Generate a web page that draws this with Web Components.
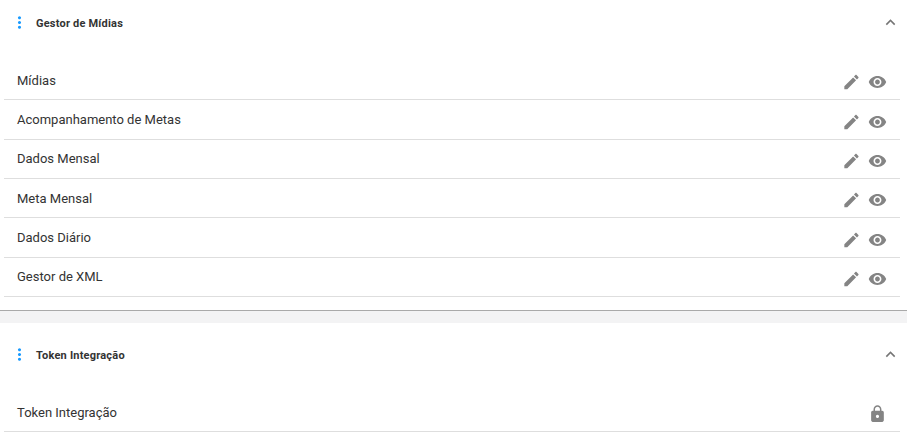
<!DOCTYPE html>
<html lang="pt-BR">
<head>
<meta charset="utf-8">
<title>Permissões</title>
<style>
    body {
        height: 442px;
        margin: 0;
        background: #f3f3f4;
        font-family: Roboto, 'Liberation Sans', sans-serif;
        color: #333333;
        overflow: hidden;
    }

    .permissions {
        display: flex;
        flex-direction: column;
        gap: 12px;
        height: 442px;
    }

    permission-panel:last-child {
        --panel-top: 9px;
        flex: 1;
        border-bottom: none;
    }
</style>
</head>
<body>
<div class="permissions">
    <permission-panel heading="Gestor de Mídias">
        <permission-row icons="edit view">Mídias</permission-row>
        <permission-row icons="edit view">Acompanhamento de Metas</permission-row>
        <permission-row icons="edit view">Dados Mensal</permission-row>
        <permission-row icons="edit view">Meta Mensal</permission-row>
        <permission-row icons="edit view">Dados Diário</permission-row>
        <permission-row icons="edit view">Gestor de XML</permission-row>
    </permission-panel>
    <permission-panel heading="Token Integração">
        <permission-row icons="lock">Token Integração</permission-row>
    </permission-panel>
</div>

<script>
const ICONS = {
    more: 'M12 8c1.1 0 2-.9 2-2s-.9-2-2-2-2 .9-2 2 .9 2 2 2zm0 2c-1.1 0-2 .9-2 2s.9 2 2 2 2-.9 2-2-.9-2-2-2zm0 6c-1.1 0-2 .9-2 2s.9 2 2 2 2-.9 2-2-.9-2-2-2z',
    less: 'M12 8l-6 6 1.41 1.41L12 10.83l4.59 4.58L18 14z',
    edit: 'M3 17.25V21h3.75L17.81 9.94l-3.75-3.75L3 17.25zM20.71 7.04c.39-.39.39-1.02 0-1.41l-2.34-2.34c-.39-.39-1.02-.39-1.41 0l-1.83 1.83 3.75 3.75 1.83-1.83z',
    view: 'M12 4.5C7 4.5 2.73 7.61 1 12c1.73 4.39 6 7.5 11 7.5s9.27-3.11 11-7.5c-1.73-4.39-6-7.5-11-7.5zM12 17c-2.76 0-5-2.24-5-5s2.24-5 5-5 5 2.24 5 5-2.24 5-5 5zm0-8c-1.66 0-3 1.34-3 3s1.34 3 3 3 3-1.34 3-3-1.34-3-3-3z',
    lock: 'M18 8h-1V6c0-2.76-2.24-5-5-5S7 3.24 7 6v2H6c-1.1 0-2 .9-2 2v10c0 1.1.9 2 2 2h12c1.1 0 2-.9 2-2V10c0-1.1-.9-2-2-2zm-6 9c-1.1 0-2-.9-2-2s.9-2 2-2 2 .9 2 2-.9 2-2 2zm3.1-9H8.9V6c0-1.71 1.39-3.1 3.1-3.1 1.71 0 3.1 1.39 3.1 3.1v2z'
};

class PanelIcon extends HTMLElement {
    constructor() {
        super();
        this.attachShadow({ mode: 'open' });
    }

    connectedCallback() {
        const box = this.getAttribute('box') || '0 0 24 24';

        this.shadowRoot.innerHTML = `
            <style>
                :host {
                    display: block;
                    width: var(--icon-size, 20px);
                    height: var(--icon-size, 20px);
                }

                svg {
                    display: block;
                    width: 100%;
                    height: 100%;
                    fill: currentColor;
                }
            </style>
            <svg viewBox="${box}"><path d="${ICONS[this.getAttribute('name')]}"/></svg>
        `;
    }
}

class PermissionRow extends HTMLElement {
    constructor() {
        super();
        this.attachShadow({ mode: 'open' });
    }

    connectedCallback() {
        const icons = this.getAttribute('icons').split(' ');

        this.shadowRoot.innerHTML = `
            <style>
                :host {
                    display: flex;
                    align-items: center;
                    justify-content: space-between;
                    box-sizing: border-box;
                    height: 39.33px;
                    padding: 0 13px;
                    border-bottom: 1px solid #dedede;
                    font-size: 13px;
                    line-height: 20px;
                }

                span {
                    padding-top: 1px;
                }

                .actions {
                    display: flex;
                    gap: 6px;
                    padding-top: 4.6px;
                    color: #848484;
                }
            </style>
            <span><slot></slot></span>
            <div class="actions">
                ${icons.map(name => `<panel-icon name="${name}" box="-1.2 -0.6 25.2 25.2"></panel-icon>`).join('')}
            </div>
        `;
    }
}

class PermissionPanel extends HTMLElement {
    constructor() {
        super();
        this.attachShadow({ mode: 'open' });
    }

    connectedCallback() {
        this.shadowRoot.innerHTML = `
            <style>
                :host {
                    display: block;
                    box-sizing: border-box;
                    height: 311px;
                    flex: none;
                    padding-top: var(--panel-top, 0);
                    background: #ffffff;
                    border-bottom: 1px solid #a9a9a9;
                }

                header {
                    display: flex;
                    align-items: center;
                    height: 46px;
                    padding: 0 7px 0 10px;
                    font-size: 11px;
                    font-weight: 700;
                    letter-spacing: 0.2px;
                }

                panel-icon {
                    --icon-size: 19px;
                    margin-bottom: 1px;
                }

                .more {
                    margin-right: 7px;
                    color: #189aff;
                }

                .less {
                    margin-left: auto;
                    color: #757575;
                }

                .rows {
                    padding: 15px 7px 0 4px;
                }
            </style>
            <header>
                <panel-icon class="more" name="more"></panel-icon>
                <span>${this.getAttribute('heading')}</span>
                <panel-icon class="less" name="less"></panel-icon>
            </header>
            <div class="rows"><slot></slot></div>
        `;
    }
}

customElements.define('panel-icon', PanelIcon);
customElements.define('permission-row', PermissionRow);
customElements.define('permission-panel', PermissionPanel);
</script>
</body>
</html>
